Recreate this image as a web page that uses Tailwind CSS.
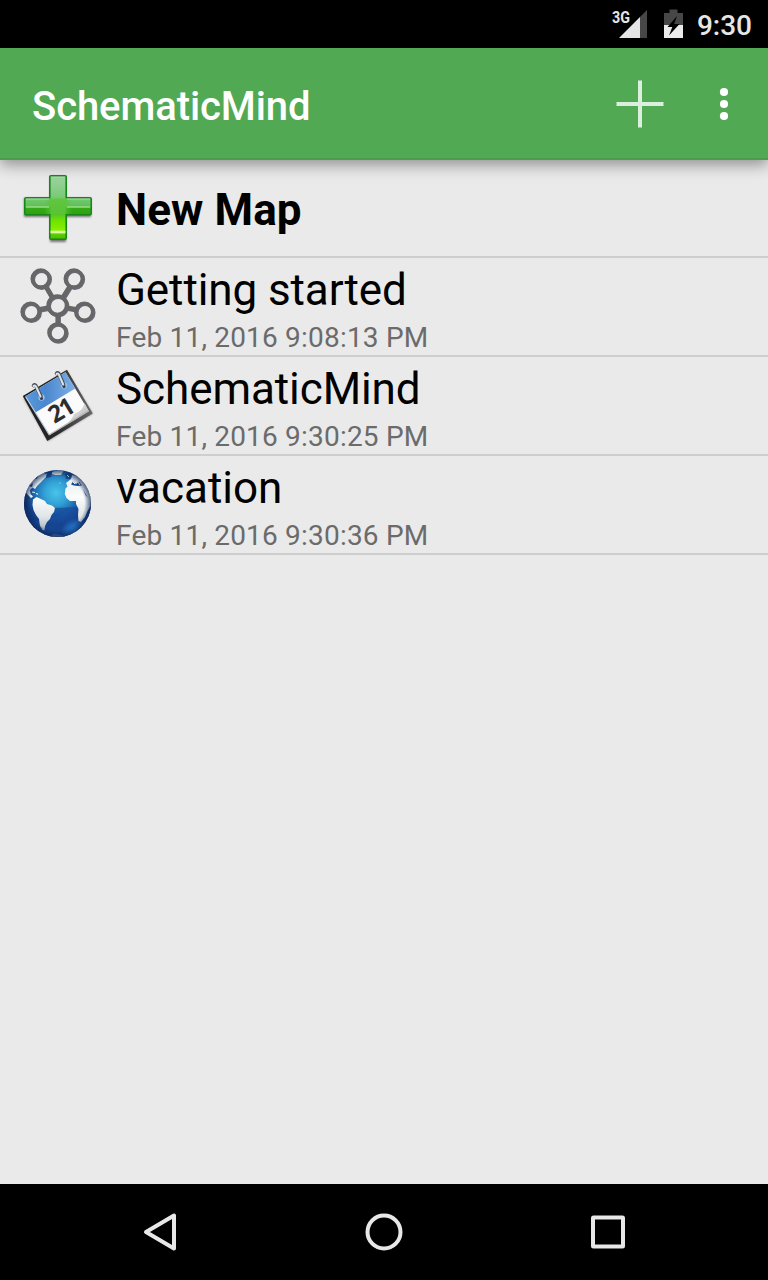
<!DOCTYPE html>
<html lang="en">

<head>
    <meta charset="UTF-8">
    <meta name="viewport" content="width=device-width, initial-scale=1.0">
    <script src="https://cdn.jsdelivr.net/npm/@tailwindcss/browser@4"></script>
    <title>SchematicMind</title>
</head>

<body class="bg-[#eaeaea] font-[Roboto,sans-serif] text-black">
    <div class="flex flex-col h-[1280px] w-[768px] overflow-hidden">
        <!-- Status bar -->
        <div class="flex items-center justify-end h-12 shrink-0 bg-black pr-4">
            <svg class="w-[96px] h-12" viewBox="600 0 96 48">
                <text x="612" y="22.8" font-family="Roboto" font-weight="700" font-size="16" textLength="18" lengthAdjust="spacingAndGlyphs" fill="#e6e6e6">3G</text>
                <path d="M647 10V38H640V17Z" fill="#474747" />
                <path d="M640 17V38H619Z" fill="#e6e6e6" />
                <path d="M664 13H669.5V9.5H677.5V13H683V25H664Z" fill="#474747" />
                <path d="M664 25H683V38H664Z" fill="#ebebeb" />
                <path d="M677 16L667.5 27H672.3L669 35.500L679.500 24H674.2Z" fill="#000" />
            </svg>
            <span class="text-[28px] leading-12 font-medium text-[#e6e6e6] w-[56px] text-right whitespace-nowrap pt-[3px]">9:30</span>
        </div>

        <!-- App bar -->
        <div class="relative z-10 flex items-center justify-between h-28 shrink-0 bg-[#52a954] border-b-2 border-[#4b9d4d] pl-8 shadow-[0_5px_14px_rgba(0,0,0,0.38)]">
            <h1 class="text-[40px] leading-none font-medium tracking-[-0.08px] text-white pt-2">SchematicMind</h1>
            <svg class="w-[168px] h-[110px]" viewBox="600 48 168 110">
                <path d="M616.5 104H663.5M640 80.5V127.5" stroke="#dceedd" stroke-width="4" fill="none" />
                <g fill="#fff">
                    <circle cx="724" cy="92" r="4.1" />
                    <circle cx="724" cy="104" r="4.1" />
                    <circle cx="724" cy="116" r="4.1" />
                </g>
            </svg>
        </div>

        <!-- Map list -->
        <ul class="flex-1">
            <li class="flex h-[98px] border-b-2 border-[#cecece]">
                <svg class="w-[116px] h-24" viewBox="0 160 116 96">
                    <defs>
                        <linearGradient id="plusV" x1="0" y1="175" x2="0" y2="241" gradientUnits="userSpaceOnUse">
                            <stop offset="0" stop-color="#a1d3a3" />
                            <stop offset=".3" stop-color="#7dcb7c" />
                            <stop offset=".6" stop-color="#56c42c" />
                            <stop offset=".68" stop-color="#6ee000" />
                            <stop offset=".86" stop-color="#8df200" />
                            <stop offset=".9" stop-color="#5dcc00" />
                            <stop offset="1" stop-color="#42b300" />
                        </linearGradient>
                        <linearGradient id="plusH" x1="0" y1="197" x2="0" y2="216" gradientUnits="userSpaceOnUse">
                            <stop offset="0" stop-color="#79c87a" />
                            <stop offset=".5" stop-color="#5dc151" />
                            <stop offset=".58" stop-color="#36a91c" />
                            <stop offset="1" stop-color="#2c9f05" />
                        </linearGradient>
                        <linearGradient id="plusMid" x1="44" y1="0" x2="72" y2="0" gradientUnits="userSpaceOnUse">
                            <stop offset="0" stop-color="#5ac434" stop-opacity="0" />
                            <stop offset=".25" stop-color="#5ac434" />
                            <stop offset=".75" stop-color="#5ac434" />
                            <stop offset="1" stop-color="#5ac434" stop-opacity="0" />
                        </linearGradient>
                        <filter id="soft" x="-20%" y="-20%" width="140%" height="140%">
                            <feGaussianBlur stdDeviation=".8" />
                        </filter>
                    </defs>
                    <path d="M50 176H66V198H91V217H66V242H50V217H24V198H50Z" fill="#000" opacity=".5" filter="url(#soft)" />
                    <path d="M51 175H65Q67 175 67 177V197H90Q92 197 92 199V213.5Q92 215.5 90 215.5H67V238Q67 240 65 240H51Q49 240 49 238V215.5H26Q24 215.5 24 213.5V199Q24 197 26 197H49V177Q49 175 51 175Z" fill="#168717" />
                    <path d="M25.5 198.5H90.5V214H25.5Z" fill="url(#plusH)" />
                    <path d="M50.6 176.6H65.4V238.5H50.6Z" fill="url(#plusV)" />
                    <path d="M44 198.5H72V214H44Z" fill="url(#plusMid)" opacity=".75" />
                    <path d="M26 199H49M67 199H90M51 177H65" stroke="#b4e2b5" stroke-width="1" opacity=".8" />
                    <path d="M26 207H49M67 207H90" stroke="#a5e396" stroke-width="1.5" opacity=".8" />
                    <path d="M50.5 232H65.5" stroke="#d6fba0" stroke-width="2.6" />
                </svg>
                <div class="text-[44px] leading-[52px] font-bold tracking-[0.12px] pt-6">New Map</div>
            </li>
            <li class="flex h-[99px] border-b-2 border-[#cecece]">
                <svg class="w-[116px] h-[97px]" viewBox="0 258 116 97">
                    <defs>
                        <g id="nodes">
                            <path d="M45.5 286L52.5 298M70 286L62.5 298M38.5 309.5L49 307.5M66 307.5L77 309.5M57.7 314V325" stroke-width="4.6" />
                            <circle cx="57.4" cy="305.4" r="9.2" />
                            <circle cx="40.8" cy="278.7" r="8.5" />
                            <circle cx="73.9" cy="278.7" r="8.5" />
                            <circle cx="30.7" cy="311.8" r="8.5" />
                            <circle cx="84.3" cy="311.8" r="8.5" />
                            <circle cx="57.5" cy="332.5" r="8.5" />
                        </g>
                    </defs>
                    <use href="#nodes" x=".9" y=".9" fill="none" stroke="#35354a" stroke-width="3.7" opacity=".7" />
                    <use href="#nodes" fill="none" stroke="#666" stroke-width="3.7" />
                </svg>
                <div class="flex flex-col">
                    <div class="text-[44px] leading-[52px] tracking-[-0.1px] pt-[6px]">Getting started</div>
                    <div class="text-[28px] leading-8 tracking-[0.2px] text-[#6b6b6b] pt-[6px]">Feb 11, 2016 9:08:13 PM</div>
                </div>
            </li>
            <li class="flex h-[99px] border-b-2 border-[#cecece]">
                <svg class="w-[116px] h-[97px]" viewBox="0 357 116 97">
                    <defs>
                        <linearGradient id="calTop" x1="0" y1="0" x2="1" y2="0">
                            <stop offset="0" stop-color="#5c98da" />
                            <stop offset=".4" stop-color="#4a87cf" />
                            <stop offset="1" stop-color="#7fb0e6" />
                        </linearGradient>
                        <linearGradient id="calCurl" x1="0" y1="0" x2="1" y2="1">
                            <stop offset="0" stop-color="#fff" />
                            <stop offset="1" stop-color="#a5a5a5" />
                        </linearGradient>
                        <linearGradient id="calRim" x1="0" y1="0" x2="1" y2="0">
                            <stop offset="0" stop-color="#1c1c1c" />
                            <stop offset=".5" stop-color="#2b2b2b" />
                            <stop offset="1" stop-color="#6a6a6a" />
                        </linearGradient>
                    </defs>
                    <path d="M23.5 398L66.5 371L92.5 413.5L48 441Z" fill="#000" opacity=".4" filter="url(#soft)" />
                    <path d="M22.8 396L67 369.8L92.8 413.5L47.3 441Z" fill="url(#calRim)" />
                    <path d="M25.2 396.5L65.5 372.3L88.6 411L49.3 435Z" fill="#fbfbfb" />
                    <path d="M25.2 396.5L65.5 372.3L75.3 388.5L35.500 412.5Z" fill="url(#calTop)" />
                    <path d="M25.8 397L49.3 435" stroke="#b9cade" stroke-width="1.200" />
                    <path d="M84.5 403Q83 411 74 414Q72 421 62 427.5L88.8 411Z" fill="url(#calCurl)" />
                    <path d="M49 435L88.600 410.800" stroke="#b5b5b5" stroke-width="1.4" />
                    <g stroke-linecap="round" fill="none">
                        <circle cx="41.5" cy="397.5" r="3.2" fill="#8fc0ee" />
                        <circle cx="64" cy="385.500" r="3.2" fill="#8fc0ee" />
                        <circle cx="41.5" cy="398.5" r="1.500" fill="#343a42" />
                        <circle cx="64" cy="386.500" r="1.500" fill="#343a42" />
                        <path d="M33.500 385.5Q35 383.5 36.5 387L41 396.500M56.500 373.5Q58 371.500 59.5 375L63.500 384.5" stroke="#4a5058" stroke-width="3.6" />
                        <path d="M33.5 386Q35 384.5 36.5 387.5L40.5 396.5M56.5 374Q58 372.500 59.3 375.500L63.200 384.500" stroke="#dfe3e6" stroke-width="2" />
                    </g>
                    <text transform="translate(54.400 424) rotate(-31)" font-family="Open Sans" font-weight="700" font-size="24" textLength="26" fill="#2d2d2d">21</text>
                </svg>
                <div class="flex flex-col">
                    <div class="text-[44px] leading-[52px] tracking-[-0.08px] pt-[6px]">SchematicMind</div>
                    <div class="text-[28px] leading-8 tracking-[0.2px] text-[#6b6b6b] pt-[6px]">Feb 11, 2016 9:30:25 PM</div>
                </div>
            </li>
            <li class="flex h-[99px] border-b-2 border-[#cecece]">
                <svg class="w-[116px] h-[97px]" viewBox="0 456 116 97">
                    <defs>
                        <radialGradient id="sea" cx="56" cy="493" r="38" gradientUnits="userSpaceOnUse">
                            <stop offset="0" stop-color="#48c4ea" />
                            <stop offset=".3" stop-color="#32a2d6" />
                            <stop offset=".62" stop-color="#1b5ea8" />
                            <stop offset=".85" stop-color="#123777" />
                        </radialGradient>
                        <radialGradient id="seaGlow" cx="75" cy="532" r="14" gradientUnits="userSpaceOnUse">
                            <stop offset="0" stop-color="#2f8fe8" />
                            <stop offset="1" stop-color="#2f8fe8" stop-opacity="0" />
                        </radialGradient>
                        <linearGradient id="land" x1="0" y1="470" x2="0" y2="537" gradientUnits="userSpaceOnUse">
                            <stop offset="0" stop-color="#dfe6e8" />
                            <stop offset=".4" stop-color="#fbfcfc" />
                            <stop offset=".7" stop-color="#dfe5e7" />
                            <stop offset="1" stop-color="#8fa3a9" />
                        </linearGradient>
                        <radialGradient id="edge" cx="57.5" cy="503.5" r="33.5" gradientUnits="userSpaceOnUse">
                            <stop offset=".8" stop-color="#0b2350" stop-opacity="0" />
                            <stop offset="1" stop-color="#0b2350" stop-opacity=".7" />
                        </radialGradient>
                        <clipPath id="globe">
                            <circle cx="57.5" cy="503.5" r="33.5" />
                        </clipPath>
                    </defs>
                    <g clip-path="url(#globe)">
                        <path d="M23 469H92V538H23Z" fill="url(#sea)" />
                        <path d="M23 508Q50 509 92 506V538H23Z" fill="#123f90" opacity=".6" />
                        <path d="M23 520Q52 524 70 508L92 504V538H23Z" fill="#2466bc" opacity=".2" />
                        <path d="M23 469H92V538H23Z" fill="url(#seaGlow)" />
                        <g fill="url(#land)">
                            <path d="M25 489Q30 477 43 471.5L45 474L48 473L46 477L43 480L40 483L37 486L35 489L32.5 487.5L30 490L30.5 494L33 496.5L31 498L28 495L25.5 492Z" />
                            <path d="M33 499.5L36.5 497L41 499L45 501L47 504L52 505.500L55 508L54 512L51.5 515L50 519L47 522L45 526L44.5 530.5L42.5 530L40 526L39 519L36 515L33.5 510L32.5 505Z" />
                            <path d="M52 472L58 470L64 470.5L61 475L55 475L52 474Z" />
                            <path d="M66 483L71 479L72 475L79 476L84 482L88 489L91 498L90.5 506L87.5 511L85 517L81 522L78.5 521L78 515L78.5 509L76 504L76 501L70 501L66.5 498L64.800 494L65.500 488.500L67.500 486.500Z" />
                            <path d="M50 536L54 534L64 535.5L60 538L50 538Z" opacity=".5" />
                        </g>
                        <path d="M71 484.500L73 481.500L76 484L79 481.5L82 485.5L78 486L74 485.5Z M65 474L70 473L72 476L70 479L66 479Z M83 489L88 498L85.5 495Z" fill="#17498c" />
                        <path d="M34 478L38 475.5L37 479Z M47 472L52 471L51 477L46 478Z M29 486L33 483L32 487Z" fill="#17498c" />
                        <path d="M73 482L75 484M78 482L80 485M67 475L69 477" stroke="#e8f0f3" stroke-width="1" />
                        <path d="M32 492L35 492.5M36 493.5L38 494.2" stroke="#e8f3f8" stroke-width="1.2" />
                        <circle cx="60" cy="483" r=".6" fill="#bde4f2" />
                        <path d="M23 469H92V538H23Z" fill="url(#edge)" />
                    </g>
                </svg>
                <div class="flex flex-col">
                    <div class="text-[44px] leading-[52px] pt-[6px]">vacation</div>
                    <div class="text-[28px] leading-8 tracking-[0.2px] text-[#6b6b6b] pt-[6px]">Feb 11, 2016 9:30:36 PM</div>
                </div>
            </li>
        </ul>

        <!-- Navigation bar -->
        <div class="flex justify-center h-24 shrink-0 bg-black">
            <svg class="w-[530px] h-24" viewBox="119 1184 530 96" fill="none" stroke="#e8e8e8" stroke-width="4" stroke-linejoin="round">
                <path d="M174 1215.5V1248.5L146 1232Z" />
                <circle cx="384" cy="1232" r="16.5" />
                <rect x="593" y="1217.5" width="30" height="29" rx=".5" />
            </svg>
        </div>
    </div>
</body>

</html>
